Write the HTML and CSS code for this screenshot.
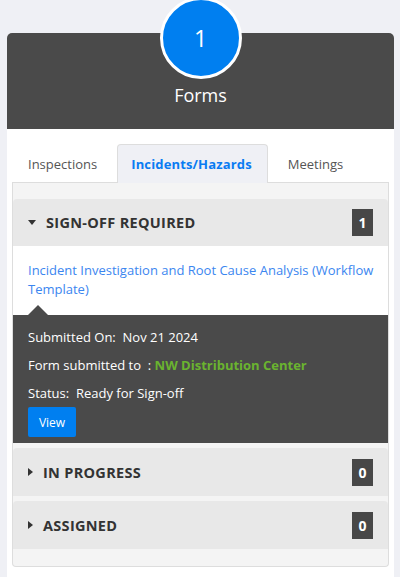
FILE: index.html
```html
<!DOCTYPE html>
<html>
<head>
<meta charset="utf-8">
<link rel="stylesheet" href="styles.css">
</head>
<body>
<div class="card">
  <div class="card-header">
    <div class="count-circle">1</div>
    <div class="card-title">Forms</div>
  </div>
  <div class="card-body">
    <div class="tabs">
      <div class="tab">Inspections</div>
      <div class="tab active">Incidents/Hazards</div>
      <div class="tab">Meetings</div>
    </div>
    <div class="panel">
      <div class="section">
        <div class="section-head">
          <span class="caret caret-down"></span>
          <span class="section-title">Sign-off Required</span>
          <span class="badge">1</span>
        </div>
        <div class="item">
          <a class="item-link">Incident Investigation and Root Cause Analysis (Workflow Template)</a>
          <span class="pointer"></span>
        </div>
        <div class="details">
          <div class="row">Submitted On:&nbsp; Nov 21 2024</div>
          <div class="row">Form submitted to&nbsp; : <span class="location">NW Distribution Center</span></div>
          <div class="row last">Status:&nbsp; Ready for Sign-off</div>
          <button class="btn">View</button>
        </div>
      </div>
      <div class="section">
        <div class="section-head">
          <span class="caret caret-right"></span>
          <span class="section-title">In Progress</span>
          <span class="badge">0</span>
        </div>
      </div>
      <div class="section">
        <div class="section-head">
          <span class="caret caret-right"></span>
          <span class="section-title">Assigned</span>
          <span class="badge">0</span>
        </div>
      </div>
    </div>
  </div>
</div>
</body>
</html>
```

FILE: styles.css
```css
* { box-sizing: border-box; }
html, body { margin: 0; padding: 0; }
body {
  background: #eff0f5;
  font-family: "Open Sans", "Liberation Sans", sans-serif;
  color: #333;
  height: 577px;
  overflow: hidden;
}
.card {
  margin: 33px 6px 0 7px;
  background: #fff;
  border-radius: 5px 5px 0 0;
  min-height: 560px;
  position: relative;
}
.card-header {
  background: #4a4a4a;
  height: 96px;
  border-radius: 5px 5px 0 0;
  padding-top: 50px;
  text-align: center;
}
.count-circle {
  position: absolute;
  left: 50%;
  top: -36px;
  margin-left: -41px;
  width: 82px;
  height: 82px;
  border-radius: 50%;
  border: 3px solid #fff;
  background: #007ff0;
  color: #fff;
  font-size: 23px;
  line-height: 76px;
  text-align: center;
}
.card-title {
  color: #fff;
  font-size: 18px;
  line-height: 24px;
}
.card-body {
  padding: 15px 5px 0 5px;
}
.tabs {
  display: flex;
  border-bottom: 1px solid #ddd;
  height: 39px;
}
.tab {
  padding: 0 15px;
  margin-right: 4px;
  font-size: 13px;
  line-height: 38px;
  color: #555;
  border: 1px solid transparent;
  border-bottom: none;
  border-radius: 4px 4px 0 0;
}
.tab.active {
  background: #eff0f5;
  border-color: #ddd;
  color: #0a7cf2;
  font-weight: 700;
  height: 39px;
  margin-bottom: -1px;
  padding: 0 15px 0 13px;
  letter-spacing: 0.15px;
}
.panel {
  background: #f4f4f4;
  border: 1px solid #ddd;
  border-top: none;
  border-radius: 0 0 4px 4px;
  padding: 16px 0 17px;
  display: flex;
  flex-direction: column;
  gap: 5px;
}
.section-head {
  display: flex;
  align-items: center;
  height: 47px;
  background: #e8e8e8;
  border-radius: 4px 4px 0 0;
  padding: 0 15px;
}
.section + .section .section-head { height: 48px; }
.caret {
  width: 0;
  height: 0;
  border-style: solid;
  margin-right: 10px;
}
.caret-down {
  border-width: 5px 4px 0 4px;
  border-color: #333 transparent transparent transparent;
}
.caret-right {
  border-width: 4px 0 4px 5px;
  border-color: transparent transparent transparent #333;
}
.section-title {
  flex: 1;
  font-size: 14.5px;
  font-weight: 700;
  text-transform: uppercase;
  letter-spacing: 0.3px;
  color: #333;
}
.badge {
  background: #474747;
  color: #fff;
  font-size: 14px;
  font-weight: 700;
  width: 21px;
  height: 27px;
  line-height: 27px;
  text-align: center;
}
.item {
  background: #fff;
  padding: 15px 8px 16px 15px;
  position: relative;
}
.item-link {
  font-size: 13px;
  line-height: 19px;
  color: #3b86f0;
  display: block;
}
.pointer {
  position: absolute;
  left: 15px;
  bottom: 0;
  width: 0;
  height: 0;
  border-style: solid;
  border-width: 0 10px 10px 10px;
  border-color: transparent transparent #4a4a4a transparent;
}
.details {
  background: #4a4a4a;
  color: #fff;
  padding: 13px 15px 6px;
}
.row {
  font-size: 13px;
  line-height: 18px;
  margin-bottom: 10px;
}
.row.last { margin-bottom: 5px; }
.location {
  color: #6ab42f;
  font-weight: 700;
}
.btn {
  display: block;
  background: #007ff0;
  color: #fff;
  border: none;
  border-radius: 2px;
  font-family: inherit;
  font-size: 12px;
  width: 48px;
  height: 30px;
  padding: 0;
}
```
